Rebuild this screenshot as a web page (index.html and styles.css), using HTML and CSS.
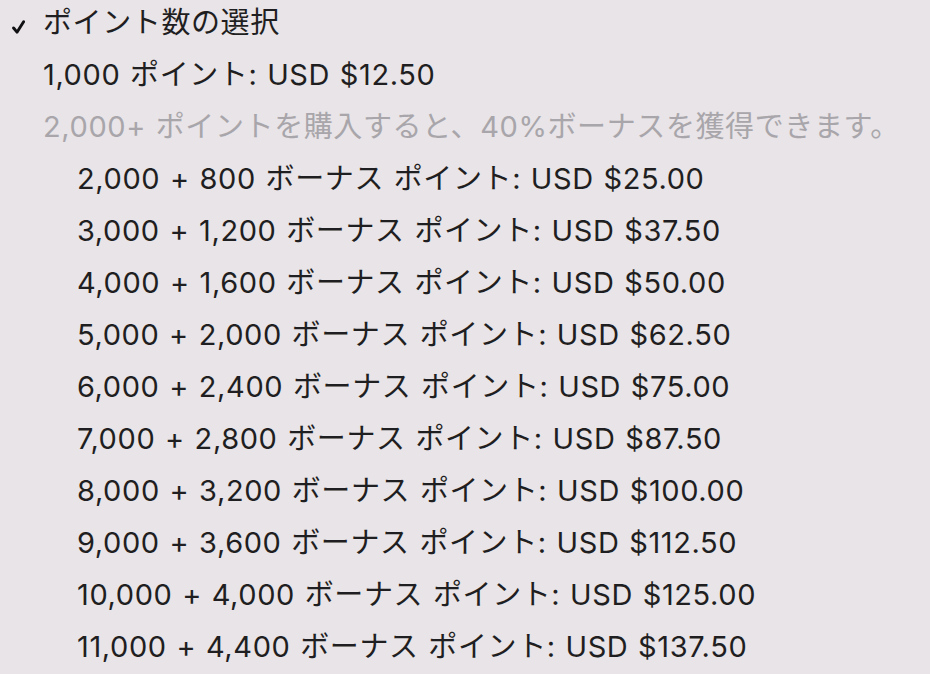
FILE: index.html
```html
<!DOCTYPE html>
<html lang="ja">
<head>
<meta charset="utf-8">
<link rel="stylesheet" href="styles.css">
</head>
<body>
<ul class="menu">
  <li class="item header"><svg class="check" viewBox="0 0 13 14" width="13" height="14"><polyline points="1.6,8 5,12.2 11.6,1.7" fill="none" stroke="#111113" stroke-width="2.9" stroke-linecap="round" stroke-linejoin="round"/></svg><span>ポイント数の選択</span></li>
  <li class="item lvl1">1,000 ポイント: USD $12.50</li>
  <li class="item lvl1 muted">2,000+ ポイントを購入すると、40%ボーナスを獲得できます。</li>
  <li class="item lvl2">2,000 + 800 ボーナス ポイント: USD $25.00</li>
  <li class="item lvl2">3,000 + 1,200 ボーナス ポイント: USD $37.50</li>
  <li class="item lvl2">4,000 + 1,600 ボーナス ポイント: USD $50.00</li>
  <li class="item lvl2">5,000 + 2,000 ボーナス ポイント: USD $62.50</li>
  <li class="item lvl2">6,000 + 2,400 ボーナス ポイント: USD $75.00</li>
  <li class="item lvl2">7,000 + 2,800 ボーナス ポイント: USD $87.50</li>
  <li class="item lvl2">8,000 + 3,200 ボーナス ポイント: USD $100.00</li>
  <li class="item lvl2">9,000 + 3,600 ボーナス ポイント: USD $112.50</li>
  <li class="item lvl2">10,000 + 4,000 ボーナス ポイント: USD $125.00</li>
  <li class="item lvl2">11,000 + 4,400 ボーナス ポイント: USD $137.50</li>
</ul>
</body>
</html>
```
FILE: styles.css
```css
html, body {
  margin: 0;
  padding: 0;
  background: #e8e4e8;
}
body {
  width: 930px;
  height: 674px;
  overflow: hidden;
  font-family: "Inter", "Noto Sans CJK JP", sans-serif;
  font-size: 29px;
  letter-spacing: 0.6px;
  word-spacing: 1px;
  color: #1f1e21;
}
.menu {
  list-style: none;
  margin: 0;
  padding: 0;
  display: flex;
  flex-direction: column;
}
.item {
  height: 52px;
  line-height: 52px;
  white-space: nowrap;
}
.item:first-child {
  margin-top: -3px;
}
.header {
  display: flex;
  align-items: center;
  padding-left: 12px;
}
.check {
  margin-right: 18px;
  margin-top: 8px;
}
.lvl1 {
  padding-left: 43px;
}
.lvl2 {
  padding-left: 77px;
}
.muted {
  color: #a8a6aa;
}
```
